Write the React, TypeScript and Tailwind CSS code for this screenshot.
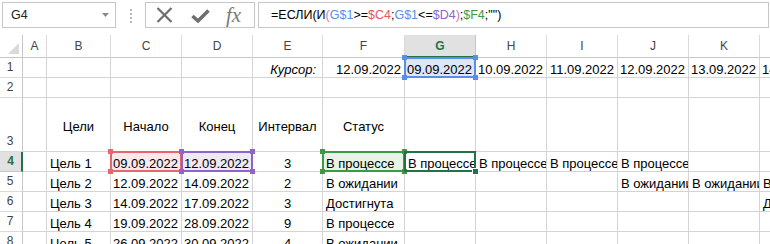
import React from 'react';

type Align = 'l' | 'r' | 'c';
type Cell = { t: string; a: Align; i?: boolean };

const COLS = ['A', 'B', 'C', 'D', 'E', 'F', 'G', 'H', 'I', 'J', 'K', 'L'];
const ROWS = [1, 2, 3, 4, 5, 6, 7, 8];

const data: Record<string, Cell> = {
  E1: { t: 'Курсор:', a: 'r', i: true },
  F1: { t: '12.09.2022', a: 'r' },
  G1: { t: '09.09.2022', a: 'r' },
  H1: { t: '10.09.2022', a: 'r' },
  I1: { t: '11.09.2022', a: 'r' },
  J1: { t: '12.09.2022', a: 'r' },
  K1: { t: '13.09.2022', a: 'r' },
  L1: { t: '14.09.2022', a: 'r' },
  B3: { t: 'Цели', a: 'c' },
  C3: { t: 'Начало', a: 'c' },
  D3: { t: 'Конец', a: 'c' },
  E3: { t: 'Интервал', a: 'c' },
  F3: { t: 'Статус', a: 'c' },
  B4: { t: 'Цель 1', a: 'l' },
  C4: { t: '09.09.2022', a: 'r' },
  D4: { t: '12.09.2022', a: 'r' },
  E4: { t: '3', a: 'c' },
  F4: { t: 'В процессе', a: 'l' },
  G4: { t: 'В процессе', a: 'l' },
  H4: { t: 'В процессе', a: 'l' },
  I4: { t: 'В процессе', a: 'l' },
  J4: { t: 'В процессе', a: 'l' },
  B5: { t: 'Цель 2', a: 'l' },
  C5: { t: '12.09.2022', a: 'r' },
  D5: { t: '14.09.2022', a: 'r' },
  E5: { t: '2', a: 'c' },
  F5: { t: 'В ожидании', a: 'l' },
  J5: { t: 'В ожидании', a: 'l' },
  K5: { t: 'В ожидании', a: 'l' },
  L5: { t: 'В ожидании', a: 'l' },
  B6: { t: 'Цель 3', a: 'l' },
  C6: { t: '14.09.2022', a: 'r' },
  D6: { t: '17.09.2022', a: 'r' },
  E6: { t: '3', a: 'c' },
  F6: { t: 'Достигнута', a: 'l' },
  L6: { t: 'Достигнута', a: 'l' },
  B7: { t: 'Цель 4', a: 'l' },
  C7: { t: '19.09.2022', a: 'r' },
  D7: { t: '28.09.2022', a: 'r' },
  E7: { t: '9', a: 'c' },
  F7: { t: 'В процессе', a: 'l' },
  B8: { t: 'Цель 5', a: 'l' },
  C8: { t: '26.09.2022', a: 'r' },
  D8: { t: '30.09.2022', a: 'r' },
  E8: { t: '4', a: 'c' },
  F8: { t: 'В ожидании', a: 'l' },
};

const fills: Record<string, string> = {
  G1: 'bg-[#dde7f7]',
  C4: 'bg-[#fbe9ea]',
  D4: 'bg-[#efe9f7]',
  F4: 'bg-[#e7f3e7]',
};

const refBorders: Record<string, { border: string; handle: string }> = {
  G1: { border: 'border-[#5b8ee8]', handle: 'bg-[#5b8ee8]' },
  C4: { border: 'border-[#e5676d]', handle: 'bg-[#e5676d]' },
  D4: { border: 'border-[#9063c8]', handle: 'bg-[#9063c8]' },
  F4: { border: 'border-[#3a9a45]', handle: 'bg-[#3a9a45]' },
};

function RefBox({ border, handle }: { border: string; handle: string }) {
  return (
    <div className={`pointer-events-none absolute -inset-[1px] z-10 border-2 ${border}`}>
      <div className={`absolute -left-[4px] -top-[4px] h-[5px] w-[5px] ${handle}`} />
      <div className={`absolute -right-[4px] -top-[4px] h-[5px] w-[5px] ${handle}`} />
      <div className={`absolute -left-[4px] -bottom-[4px] h-[5px] w-[5px] ${handle}`} />
      <div className={`absolute -right-[4px] -bottom-[4px] h-[5px] w-[5px] ${handle}`} />
    </div>
  );
}

function ActiveBox() {
  return (
    <div className="pointer-events-none absolute -inset-[1px] z-20 border-2 border-[#217346]">
      <div className="absolute -right-[5px] -bottom-[5px] h-[7px] w-[7px] border border-white bg-[#217346]" />
    </div>
  );
}

function CellView({ id, row }: { id: string; row: number }) {
  const c = data[id];
  const align = c?.i
    ? 'text-right pr-[6px]'
    : c?.a === 'r'
      ? 'text-right pr-[3px]'
      : c?.a === 'c'
        ? 'text-center'
        : 'text-left pl-[3px]';
  const vert = row === 3 ? 'items-center pt-[3px]' : 'items-end';
  return (
    <div
      className={`relative flex ${vert} border-b border-r border-[#d4d4d4] ${fills[id] ?? 'bg-white'}`}
    >
      {c && (
        <div className={`w-full overflow-hidden whitespace-nowrap leading-[15px] ${align} ${c.i ? 'italic' : ''}`}>
          {c.t}
        </div>
      )}
      {refBorders[id] && <RefBox {...refBorders[id]} />}
      {id === 'G4' && <ActiveBox />}
    </div>
  );
}

function XIcon() {
  return (
    <svg width="17" height="16" viewBox="0 0 17 16">
      <path d="M1.5 1 L15.5 15 M15.5 1 L1.5 15" stroke="#6f6f6f" strokeWidth="2.2" fill="none" />
    </svg>
  );
}

function CheckIcon() {
  return (
    <svg width="19" height="14" viewBox="0 0 19 14">
      <path d="M1.5 7 L7 12 L17.5 1.5" stroke="#6f6f6f" strokeWidth="3.6" fill="none" strokeLinejoin="round" />
    </svg>
  );
}

export default function App() {
  return (
    <div className="h-[244px] w-[770px] overflow-hidden bg-white font-['Liberation_Sans',Arial,sans-serif] text-[13px] text-black">
      {/* formula bar area */}
      <div className="flex h-[35px] w-[770px] items-start">
        <div className="ml-[2px] mt-[2px] flex h-[26px] w-[114px] items-center justify-between border border-[#c6c6c6] pl-[8px] pr-[6px] text-[12.5px] text-[#222]">
          <span>G4</span>
          <svg width="7" height="4" viewBox="0 0 7 4">
            <path d="M0 0 L7 0 L3.5 4 Z" fill="#8a8a8a" />
          </svg>
        </div>
        <div className="ml-[14px] mt-[9px] flex flex-col gap-[2px]">
          <div className="h-[2px] w-[2px] bg-[#b5b5b5]" />
          <div className="h-[2px] w-[2px] bg-[#b5b5b5]" />
          <div className="h-[2px] w-[2px] bg-[#b5b5b5]" />
          <div className="h-[2px] w-[2px] bg-[#b5b5b5]" />
        </div>
        <div className="ml-[13px] mt-[2px] flex h-[26px] w-[110px] items-center border border-[#c6c6c6] pl-[10px]">
          <XIcon />
          <div className="ml-[18px] mt-[2px]">
            <CheckIcon />
          </div>
          <span className="ml-[16px] font-['Liberation_Serif',serif] text-[21px] italic leading-none text-[#7a7a7a]">
            fx
          </span>
        </div>
        <div className="ml-[3px] mt-[2px] flex h-[26px] w-[511px] items-center border border-[#c6c6c6] pl-[12px] text-[12.5px]">
          <span>=ЕСЛИ(И</span>
          <span className="text-[#e0709c]">(</span>
          <span className="text-[#5b8ee8]">G$1</span>
          <span>&gt;=</span>
          <span className="text-[#e5575d]">$C4</span>
          <span>;</span>
          <span className="text-[#5b8ee8]">G$1</span>
          <span>&lt;=</span>
          <span className="text-[#9063c8]">$D4</span>
          <span className="text-[#e0709c]">)</span>
          <span>;</span>
          <span className="text-[#3a9a45]">$F4</span>
          <span>;"")</span>
        </div>
      </div>

      {/* grid */}
      <div className="grid w-[830px] grid-cols-[23px_24px_64px_71px_71px_70px_82px_71px_71px_71px_71px_71px_71px] grid-rows-[23px_20px_20px_54px_20px_20px_20px_20px_20px]">
        {/* corner */}
        <div className="relative border-b border-r border-[#c6c6c6]">
          <svg className="absolute bottom-[3px] right-[3px]" width="11" height="11" viewBox="0 0 11 11">
            <path d="M11 0 L11 11 L0 11 Z" fill="#dadada" />
          </svg>
        </div>
        {COLS.map((c) =>
          c === 'G' ? (
            <div
              key={c}
              className="flex items-end justify-center border-b-2 border-r border-b-[#217346] border-r-[#c6c6c6] bg-[#e1e1e1] pb-[3px] text-[12px] font-bold leading-[14px] text-[#217346]"
            >
              {c}
            </div>
          ) : (
            <div
              key={c}
              className="flex items-end justify-center border-b border-r border-b-[#c6c6c6] border-r-[#dadada] pb-[4px] text-[12px] leading-[14px] text-[#444]"
            >
              {c}
            </div>
          )
        )}
        {ROWS.map((r) => (
          <React.Fragment key={r}>
            {r === 4 ? (
              <div className="flex items-end justify-center border-b border-r-2 border-b-[#c6c6c6] border-r-[#217346] bg-[#e1e1e1] pb-[3px] text-[12px] font-bold leading-[14px] text-[#217346]">
                {r}
              </div>
            ) : (
              <div className="flex items-end justify-center border-b border-r border-b-[#dadada] border-r-[#c6c6c6] pb-[3px] pr-[2px] text-[12px] leading-[14px] text-[#444]">
                {r}
              </div>
            )}
            {COLS.map((c) => (
              <CellView key={c + r} id={c + r} row={r} />
            ))}
          </React.Fragment>
        ))}
      </div>
    </div>
  );
}
